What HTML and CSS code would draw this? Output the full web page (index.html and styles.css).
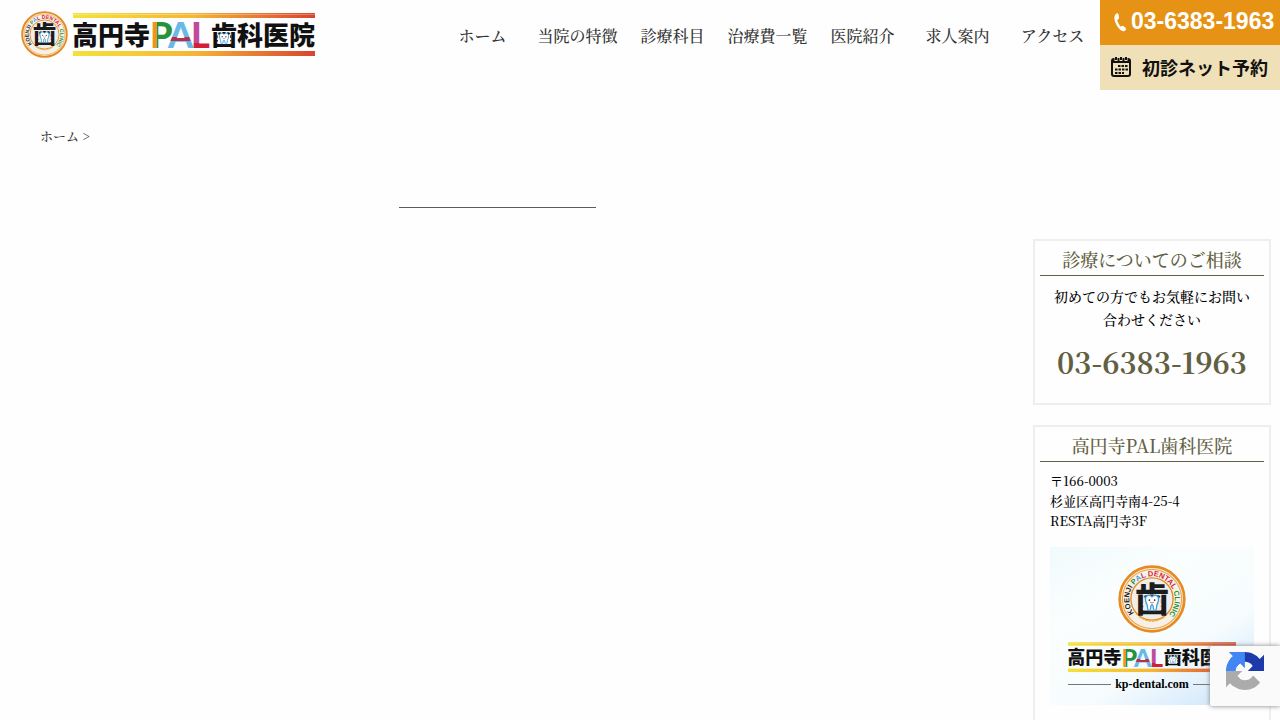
FILE: index.html
```html
<!DOCTYPE html>
<html lang="ja">

<head>
  <meta charset="UTF-8">
  <meta name="viewport" content="width=device-width, initial-scale=1.0">
  <title>高円寺PAL歯科医院</title>
  <link rel="stylesheet" href="styles.css">
</head>

<body>
  <!-- shared logo parts -->
  <svg class="defs" width="0" height="0" aria-hidden="true">
    <defs>
      <linearGradient id="rule">
        <stop offset="0" stop-color="#f3e23a" />
        <stop offset="0.5" stop-color="#f5b635" />
        <stop offset="1" stop-color="#d9432f" />
      </linearGradient>
      <linearGradient id="letterP">
        <stop offset="0.3" stop-color="#ee9420" />
        <stop offset="0.3" stop-color="#25923c" />
      </linearGradient>
      <linearGradient id="letterA" x1="0" y1="0" x2="0" y2="1">
        <stop offset="0.57" stop-color="#6ab8e8" />
        <stop offset="0.57" stop-color="#b5314a" />
        <stop offset="0.67" stop-color="#b5314a" />
        <stop offset="0.67" stop-color="#6ab8e8" />
      </linearGradient>
      <linearGradient id="letterL" x1="0" y1="0" x2="0" y2="1">
        <stop offset="0.7" stop-color="#c04a9a" />
        <stop offset="0.7" stop-color="#d21f35" />
      </linearGradient>
      <path id="ring" d="M23.600 70.600A33.500 33.500 0 1 1 76.400 70.600" />
    </defs>
    <symbol id="tooth" viewBox="0 0 24 28">
      <path d="M12 5C8 1 2 2 2 9c0 4 2 6 3 10 0 5 1 7 3 7 3 0 1-9 4-9s1 9 4 9c2 0 3-2 3-7 1-4 3-6 3-10 0-7-6-8-10-4z"
        fill="#fff" stroke="#3d9fdc" stroke-width="2" />
      <circle cx="8" cy="10" r="1.300" fill="#222" />
      <circle cx="16" cy="10" r="1.300" fill="#222" />
      <path d="M9 13q3 3 6 0" fill="none" stroke="#d44" stroke-width="1.200" />
    </symbol>
    <symbol id="emblem" viewBox="0 0 100 100">
      <circle cx="50" cy="50" r="47.500" fill="#f6f1e8" stroke="#e78a22" stroke-width="4" />
      <circle cx="50" cy="50" r="43.500" fill="none" stroke="#efa13a" stroke-width="1.500" />
      <circle cx="50" cy="50" r="31" fill="#f0eeeb" stroke="#e78a22" stroke-width="2" />
      <text class="ring-text">
        <textPath href="#ring"><tspan fill="#222">KOENJI </tspan><tspan fill="#25923c">P</tspan><tspan fill="#4aa3dd">A</tspan><tspan fill="#b02a8a">L </tspan><tspan fill="#d21f35">DENTAL </tspan><tspan fill="#25923c">CLINIC</tspan></textPath>
      </text>
      <text class="emblem-kanji" x="50" y="69">歯</text>
      <rect x="37" y="50" width="26" height="17" fill="#f0eeeb" />
      <use href="#tooth" x="37" y="42" width="26" height="27" />
      <path d="M31 76q19 13 38 0" fill="none" stroke="#e9b04a" stroke-width="2" stroke-dasharray="4 1" />
    </symbol>
    <symbol id="wordmark" viewBox="0 0 242 44">
      <rect y="0" width="242" height="5" fill="url(#rule)" />
      <rect y="1" width="242" height="1" fill="#fff" opacity="0.300" />
      <rect y="38" width="242" height="5" fill="url(#rule)" />
      <text class="mark-kanji" x="-1" y="32">高円寺</text>
      <text class="mark-latin" x="77" y="35" fill="url(#letterP)">P</text>
      <text class="mark-latin" x="95" y="35" fill="url(#letterA)">A</text>
      <text class="mark-latin" x="118" y="35" fill="url(#letterL)">L</text>
      <text class="mark-kanji" x="138" y="32">歯科医院</text>
      <rect x="145" y="22" width="12" height="9" fill="#fff" />
      <use href="#tooth" x="145" y="19" width="12" height="13" />
    </symbol>
  </svg>

  <header class="header">
    <a href="#" class="logo" aria-label="高円寺PAL歯科医院">
      <svg class="logo-emblem"><use href="#emblem" /></svg>
      <svg class="logo-mark"><use href="#wordmark" /></svg>
    </a>
    <nav class="nav">
      <a href="#">ホーム</a>
      <a href="#">当院の特徴</a>
      <a href="#">診療科目</a>
      <a href="#">治療費一覧</a>
      <a href="#">医院紹介</a>
      <a href="#">求人案内</a>
      <a href="#">アクセス</a>
    </nav>
    <div class="actions">
      <a href="tel:03-6383-1963" class="action action-tel">
        <svg class="icon-tel" viewBox="0 0 14 22">
          <path d="M4 1C0 3 0 8 3 14c3 5 6 8 9 7l2-2c0-1-3-4-4-4l-2 1c-1 0-4-6-4-7l2-2c0-1 0-5-2-6z" fill="#fff" />
        </svg>
        <span>03-6383-1963</span>
      </a>
      <a href="#" class="action action-web">
        <svg class="icon-cal" viewBox="0 0 22 22">
          <rect x="2" y="3" width="18" height="17" rx="2" fill="none" stroke="#111" stroke-width="2" />
          <path d="M2 3h18v4H2z" fill="#111" />
          <path d="M6 0v5M11 0v5M16 0v5" stroke="#f0e0b8" stroke-width="3" />
          <path d="M6 1v3M11 1v3M16 1v3" stroke="#111" stroke-width="2" />
          <path d="M8 10h10M5 13.500h13M5 17h9" stroke="#111" stroke-width="2" stroke-dasharray="2.500 1" />
        </svg>
        <span>初診ネット予約</span>
      </a>
    </div>
  </header>

  <div class="breadcrumb"><a href="#">ホーム</a> &gt;</div>

  <div class="content">
    <main class="main">
      <h1 class="page-title"></h1>
    </main>

    <aside class="sidebar">
      <section class="box">
        <h2>診療についてのご相談</h2>
        <p class="lead">初めての方でもお気軽にお問い合わせください</p>
        <a href="tel:03-6383-1963" class="tel">03-6383-1963</a>
      </section>

      <section class="box">
        <h2>高円寺PAL歯科医院</h2>
        <address>
          〒166-0003<br>
          杉並区高円寺南4-25-4<br>
          RESTA高円寺3F
        </address>
        <div class="signboard">
          <svg class="sign-emblem"><use href="#emblem" /></svg>
          <svg class="sign-mark"><use href="#wordmark" /></svg>
          <div class="sign-url">kp-dental.com</div>
        </div>
        <svg class="map" viewBox="0 0 204 120">
          <circle cx="165" cy="9" r="8" fill="none" stroke="#444" stroke-width="2" />
        </svg>
      </section>
    </aside>
  </div>

  <div class="recaptcha">
    <svg viewBox="0 0 64 64" aria-label="reCAPTCHA">
      <path fill="#1c3aa9" d="M64 31.955l-.033-1.370V4.687l-7.160 7.160C50.948 4.674 42.033.093 32.050.093c-10.400 0-19.622 4.960-25.458 12.640l11.736 11.860a15.550 15.550 0 0 1 4.754-5.334c2.050-1.600 4.952-2.906 8.968-2.906.485 0 .860.057 1.135.163 4.976.393 9.288 3.140 11.828 7.124l-8.307 8.307L64 31.953" />
      <path fill="#4285f4" d="M31.862.094l-1.370.033H4.594l7.160 7.160C4.580 13.147 0 22.060 0 32.046c0 10.400 4.960 19.622 12.640 25.458L24.500 45.768a15.550 15.550 0 0 1-5.334-4.754c-1.600-2.050-2.906-4.952-2.906-8.968 0-.485.057-.860.163-1.135.393-4.976 3.140-9.288 7.124-11.828l8.307 8.307L31.860.095" />
      <path fill="#ababab" d="M.001 32.045l.033 1.370v25.898l7.160-7.160c5.860 7.173 14.774 11.754 24.760 11.754 10.400 0 19.622-4.960 25.458-12.640l-11.736-11.860a15.550 15.550 0 0 1-4.754 5.334c-2.050 1.600-4.952 2.906-8.968 2.906-.485 0-.860-.057-1.135-.163-4.976-.393-9.288-3.140-11.828-7.124l8.307-8.307c-10.522.040-22.400.066-27.295-.005" />
    </svg>
  </div>
</body>

</html>
```
FILE: styles.css
```css
* {
  box-sizing: border-box;
}

body {
  margin: 0;
  background: #fefefe;
  color: #000;
  font-family: "Noto Serif CJK JP", "Liberation Serif", "Noto Sans CJK JP", serif;
  font-size: 14px;
  font-weight: 500;
}

a {
  color: inherit;
  text-decoration: none;
}

svg {
  display: block;
}

.defs {
  position: absolute;
}

/* Logo */
.ring-text {
  font: bold 11px "Liberation Sans", sans-serif;
}

.emblem-kanji {
  font: 900 50px "Noto Sans CJK JP", sans-serif;
  text-anchor: middle;
  fill: #1c1c1c;
}

.mark-kanji {
  font: 900 26px "Noto Sans CJK JP", sans-serif;
  fill: #111;
}

.mark-latin {
  font: 900 36px Lato, sans-serif;
}

/* Header */
.header {
  display: flex;
  align-items: flex-start;
  height: 90px;
}

.logo {
  display: flex;
  align-items: center;
  gap: 5px;
  padding: 11px 0 0 21px;
}

.logo-emblem {
  width: 47px;
  height: 47px;
}

.logo-mark {
  width: 242px;
  height: 44px;
}

.nav {
  flex: 1;
  display: flex;
  max-width: 665px;
  margin-left: auto;
}

.nav a {
  flex: 1;
  color: #333;
  font-size: 16px;
  line-height: 72px;
  text-align: center;
  white-space: nowrap;
}

.actions {
  width: 180px;
  font-family: "Liberation Sans", "Noto Sans CJK JP", sans-serif;
  font-weight: bold;
}

.action {
  display: flex;
  align-items: center;
  height: 45px;
  padding-bottom: 2px;
  white-space: nowrap;
}

.action-tel {
  gap: 4px;
  padding-left: 13px;
  background: #e69214;
  color: #fff;
  font-size: 23px;
}

.action-web {
  gap: 10px;
  padding-left: 10px;
  background: #f0e0b8;
  color: #111;
  font-size: 18px;
}

.icon-tel {
  width: 14px;
  height: 20px;
}

.icon-cal {
  width: 22px;
  height: 22px;
}

/* Content */
.breadcrumb {
  padding: 36px 40px 1px;
  color: #333;
  font-size: 13px;
  line-height: 20px;
}

.content {
  display: flex;
  padding: 60px 9px 0 0;
}

.main {
  flex: 1;
  margin-right: 38px;
}

.page-title {
  width: 197px;
  margin: 0 auto;
  border-bottom: 1px solid #555f55;
}

.sidebar {
  width: 238px;
  padding-top: 32px;
}

.box {
  margin-bottom: 20px;
  padding: 5px;
  border: 2px solid #eee;
}

.box h2 {
  margin: 0;
  padding-bottom: 2px;
  border-bottom: 1px solid #626042;
  color: #626042;
  font-size: 18px;
  font-weight: 500;
  line-height: 27px;
  text-align: center;
}

.lead {
  margin: 9px 0 0;
  padding: 0 10px;
  line-height: 23px;
  text-align: center;
}

.tel {
  display: block;
  padding: 8px 0 13px;
  color: #626042;
  font-size: 29px;
  font-weight: bold;
  line-height: 46px;
  text-align: center;
}

address {
  padding: 9px 10px 0;
  font-size: 13px;
  font-style: normal;
  line-height: 20px;
}

/* Signboard */
.signboard {
  display: flex;
  flex-direction: column;
  align-items: center;
  height: 158px;
  margin: 16px 10px 0;
  padding-top: 18px;
  background: linear-gradient(150deg, #f0fafc, #fbfefe 30%, #f6fcfe 65%, #c8e2fa);
}

.sign-emblem {
  width: 68px;
  height: 68px;
}

.sign-mark {
  width: 168px;
  height: 31px;
  margin-top: 9px;
}

.sign-url {
  display: flex;
  align-items: center;
  gap: 4px;
  width: 168px;
  margin-top: 3px;
  font-family: "Liberation Serif", serif;
  font-size: 12px;
  font-weight: bold;
  line-height: 16px;
}

.sign-url::before,
.sign-url::after {
  content: "";
  flex: 1;
  border-top: 1px solid #777;
}

.map {
  width: 204px;
  margin: 15px 10px 0;
}

/* Badge over the page corner */
.recaptcha {
  position: fixed;
  right: 0;
  bottom: 14px;
  width: 70px;
  height: 60px;
  padding: 6px 16px;
  border-radius: 2px 0 0 2px;
  background: #fafafa;
  box-shadow: 0 0 5px gray;
}

.recaptcha svg {
  width: 38px;
  height: 38px;
}
```
